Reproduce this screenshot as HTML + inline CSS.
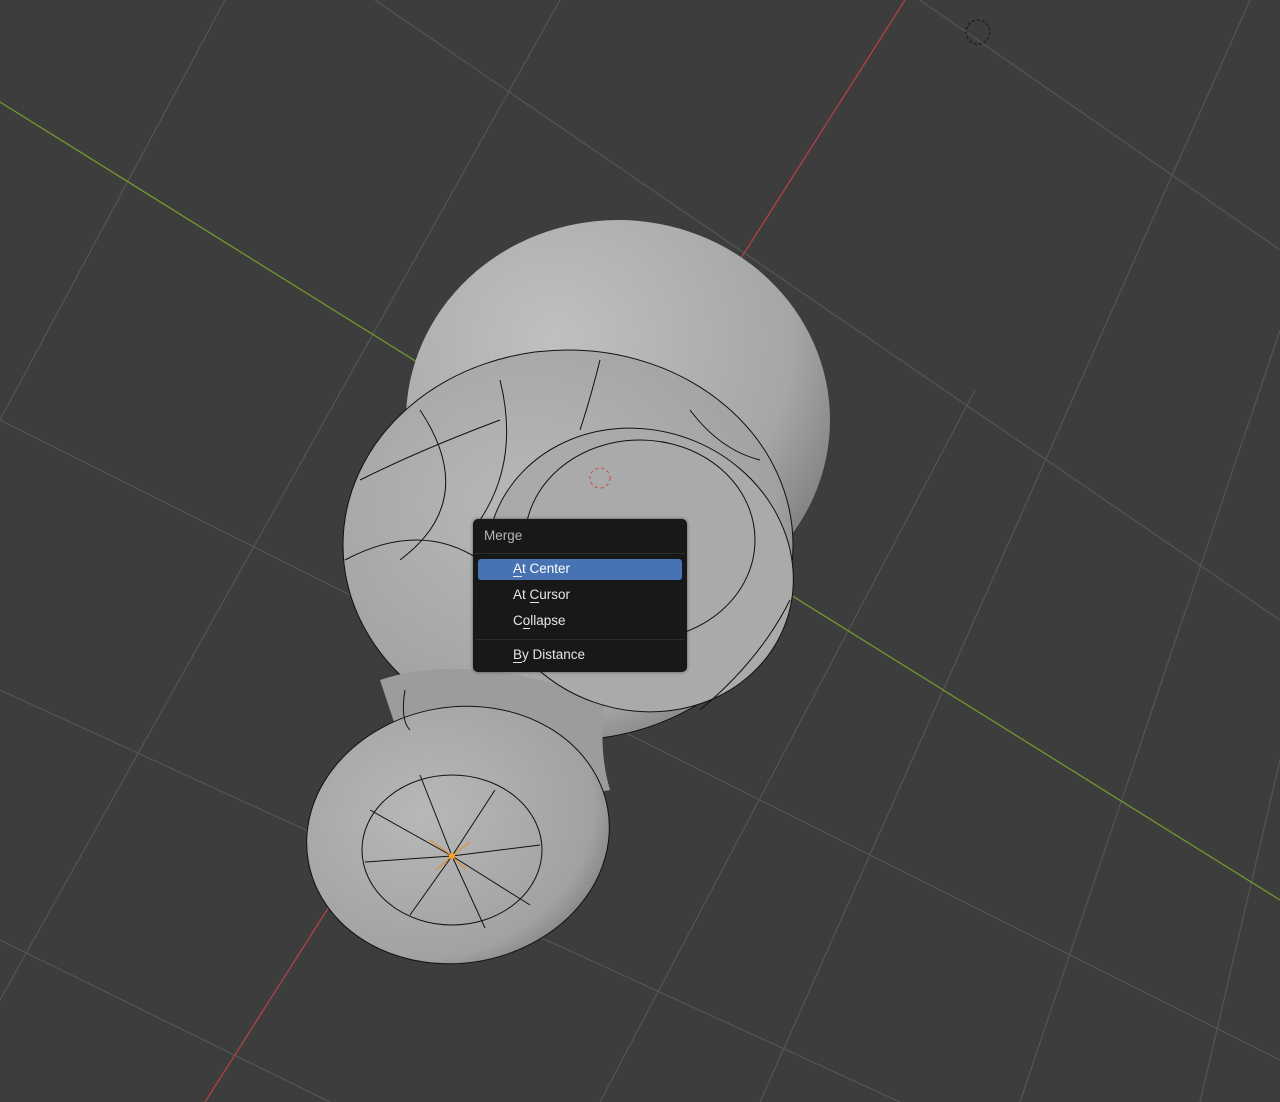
<!DOCTYPE html>
<html><head><meta charset="utf-8"><style>
html,body{margin:0;padding:0;background:#3d3d3d;}
.wrap{position:relative;width:1280px;height:1102px;overflow:hidden;}
svg{position:absolute;left:0;top:0}
.menu{position:absolute;left:473px;top:519px;width:214px;height:153px;background:#181818;border-radius:5px;font-family:"Liberation Sans","DejaVu Sans",sans-serif;font-size:13.5px;color:#e6e6e6;box-shadow:0 0 3px rgba(0,0,0,.5)}
.menu .t{position:absolute;left:11px;top:9px;color:#b8b8b8}
.menu .sep{position:absolute;left:2px;right:2px;height:1px;background:#2c2c2c}
.menu .it{position:absolute;left:40px}
.menu .hl{position:absolute;left:5px;top:40px;width:204px;height:21px;background:#4772b3;border-radius:3px}
u{text-decoration:none;border-bottom:1px solid #e6e6e6;}
</style></head><body><div class="wrap">
<svg width="1280" height="1102" viewBox="0 0 1280 1102">
<defs>
<radialGradient id="g1" cx="0.35" cy="0.3" r="0.8"><stop offset="0" stop-color="#c0c0c0"/><stop offset="0.7" stop-color="#a6a6a6"/><stop offset="1" stop-color="#777"/></radialGradient>
<radialGradient id="g2" cx="0.4" cy="0.4" r="0.7"><stop offset="0" stop-color="#b8b8b8"/><stop offset="0.8" stop-color="#a2a2a2"/><stop offset="1" stop-color="#7a7a7a"/></radialGradient>
</defs>
<g stroke="#555" stroke-width="1.2" fill="none">
<line x1="375" y1="0" x2="1280" y2="620"/>
<line x1="0" y1="420" x2="1280" y2="1060"/>
<line x1="0" y1="690" x2="900" y2="1102"/>
<line x1="0" y1="940" x2="330" y2="1102"/>
<line x1="920" y1="0" x2="1280" y2="250"/>
<line x1="560" y1="0" x2="0" y2="1000"/>
<line x1="225" y1="0" x2="0" y2="420"/>
<line x1="1250" y1="0" x2="760" y2="1102"/>
<line x1="1280" y1="330" x2="1020" y2="1102"/>
<line x1="1280" y1="760" x2="1200" y2="1102"/>
<line x1="975" y1="390" x2="600" y2="1102"/>
</g>
<line x1="0" y1="102" x2="1280" y2="900" stroke="#6f9a2c" stroke-width="1.3"/>
<line x1="905" y1="0" x2="205" y2="1102" stroke="#b0404a" stroke-width="1.3"/>
<circle cx="978" cy="32" r="12" fill="none" stroke="#222" stroke-dasharray="3 2" stroke-width="1.5"/>
<ellipse cx="618" cy="420" rx="212" ry="200" fill="url(#g1)"/>
<ellipse cx="568" cy="545" rx="225" ry="195" fill="url(#g2)" stroke="#111"/>
<path d="M380 680 Q470 650 605 700 Q598 750 610 790 Q560 800 520 770 L400 740 Z" fill="#9c9c9c"/>
<ellipse cx="640" cy="570" rx="155" ry="140" fill="#aaa" stroke="#111" transform="rotate(20 640 570)"/>
<ellipse cx="640" cy="540" rx="115" ry="100" fill="none" stroke="#111"/>
<ellipse cx="458" cy="835" rx="152" ry="128" fill="url(#g2)" stroke="#111" transform="rotate(-10 458 835)"/>
<ellipse cx="452" cy="850" rx="90" ry="75" fill="none" stroke="#111"/>
<g stroke="#111" fill="none" stroke-width="1">
<line x1="452" y1="856" x2="420" y2="775"/><line x1="452" y1="856" x2="495" y2="790"/><line x1="452" y1="856" x2="540" y2="845"/><line x1="452" y1="856" x2="530" y2="905"/><line x1="452" y1="856" x2="485" y2="928"/><line x1="452" y1="856" x2="410" y2="915"/><line x1="452" y1="856" x2="365" y2="862"/><line x1="452" y1="856" x2="370" y2="810"/>
<path d="M420 410 Q480 500 400 560"/><path d="M500 380 Q520 460 480 520"/><path d="M360 480 Q420 450 500 420"/><path d="M345 560 Q420 520 480 560"/><path d="M600 360 Q590 400 580 430"/><path d="M690 410 Q720 450 760 460"/><path d="M700 710 Q760 660 790 600"/><path d="M405 690 Q400 720 410 730"/>
</g>
<g stroke="#e8891c" stroke-width="1"><line x1="452" y1="856" x2="430" y2="840"/><line x1="452" y1="856" x2="470" y2="842"/><line x1="452" y1="856" x2="466" y2="870"/><line x1="452" y1="856" x2="436" y2="870"/></g>
<circle cx="452" cy="856" r="3" fill="#f7a21c"/>
<circle cx="600" cy="478" r="10" fill="none" stroke="#c44" stroke-dasharray="3 3"/>
</svg>
<div class="menu">
<div class="t">Merge</div>
<div class="sep" style="top:34px"></div>
<div class="hl"></div>
<div class="it" style="top:42px;color:#fff"><u>A</u>t Center</div>
<div class="it" style="top:68px">At <u>C</u>ursor</div>
<div class="it" style="top:94px">C<u>o</u>llapse</div>
<div class="sep" style="top:120px"></div>
<div class="it" style="top:128px"><u>B</u>y Distance</div>
</div>
</div></body></html>
